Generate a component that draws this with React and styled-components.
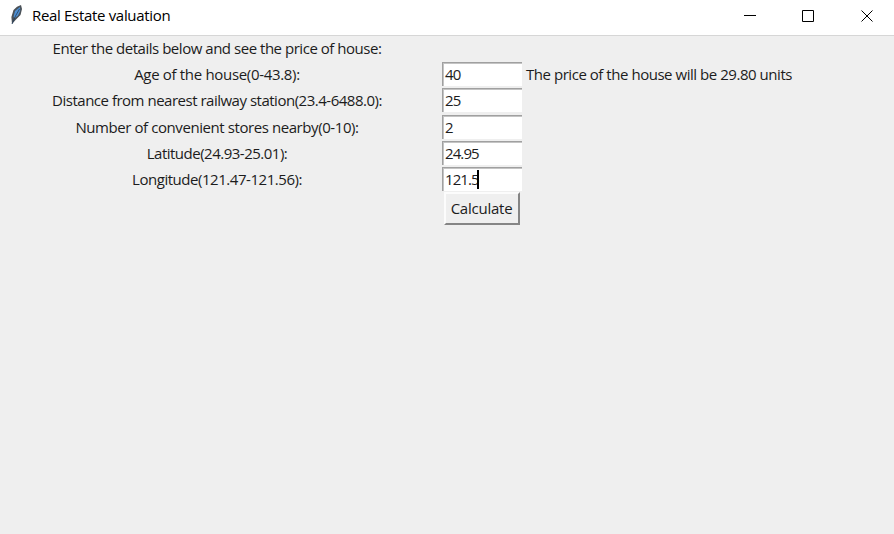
import React from 'react';
import styled, { createGlobalStyle } from 'styled-components';

const GlobalStyle = createGlobalStyle`
  * { box-sizing: border-box; }
  body { margin: 0; overflow: hidden; background: #efefef; }
`;
const Window = styled.div`
  width: 894px;
  height: 534px;
  background: #efefef;
  color: #1c1c1c;
  font: 15px/20px 'Open Sans', 'Noto Sans', sans-serif;
`;
const TitleBar = styled.header`
  display: flex;
  align-items: center;
  height: 36px;
  padding: 0 0 5px 9px;
  background: #fff;
  border-bottom: 1px solid #d6d6d6;
  color: #000;
`;
const Title = styled.h1`
  flex: 1;
  margin: 0 0 0 9px;
  font-size: 15px;
  font-weight: 400;
  letter-spacing: -0.32px;
  white-space: nowrap;
`;
const Controls = styled.div`
  display: flex;
  margin: 1px -3px 0 0;
`;
const Control = styled.div`
  display: grid;
  place-items: center;
  width: ${p => p.$width || 58}px;
  height: 31px;
`;
const Form = styled.main`
  display: grid;
  grid-template-columns: 434px 96px 364px;
  grid-template-rows: 26px 26px 27px 26px 26px 26px 34px;
`;
const Label = styled.label`
  grid-column: 1;
  display: flex;
  justify-content: center;
  align-items: center;
  height: 24px;
  letter-spacing: ${p => p.$spacing}px;
  white-space: nowrap;
`;
const Entry = styled.div`
  grid-column: 2;
  justify-self: center;
  display: flex;
  align-items: center;
  width: 80px;
  height: 24px;
  padding: 0 0 1px 2px;
  border-top: 1px solid #a0a0a0;
  border-left: 1px solid #a0a0a0;
  background: #fff;
  box-shadow: inset 1px 1px #c4c4c4;
  letter-spacing: -0.9px;
`;
const Caret = styled.i`
  width: 2px;
  height: 19px;
  margin-left: -2px;
  background: #000;
`;
const Result = styled.output`
  grid-column: 3;
  height: 24px;
  margin-left: -4px;
  line-height: 24px;
  letter-spacing: -0.46px;
  white-space: nowrap;
`;
const Button = styled.button`
  grid-column: 2;
  justify-self: center;
  width: 76px;
  height: 33px;
  margin-top: -1px;
  padding: 0 1px 1px 0;
  border: 2px solid;
  border-color: #fcfcfc #858585 #858585 #fcfcfc;
  background: #efefef;
  color: inherit;
  font: inherit;
  letter-spacing: -0.24px;
`;

const fields = [
  { label: 'Age of the house(0-43.8):', value: '40', spacing: -0.32 },
  { label: 'Distance from nearest railway station(23.4-6488.0):', value: '25', spacing: -0.49 },
  { label: 'Number of convenient stores nearby(0-10):', value: '2', spacing: -0.42 },
  { label: 'Latitude(24.93-25.01):', value: '24.95', spacing: -0.5 },
  { label: 'Longitude(121.47-121.56):', value: '121.5', spacing: -0.46, focused: true },
];

function Feather() {
  return (
    <svg width="14" height="22" viewBox="0 0 14 22">
      <path d="M3 20 2.4 13 4.5 6 8 2.8 12 1 13 5 11.5 11 7 15.5Z" fill="#4b5157" />
      <path d="M4.5 13 6 7 11 3 11.2 7 9 11.5 6 14Z" fill="#4e8fd2" />
      <path d="M3 20 6.5 12 10.5 5" fill="none" stroke="#243e5c" strokeWidth=".8" />
    </svg>
  );
}

export default function App() {
  return (
    <Window>
      <GlobalStyle />
      <TitleBar>
        <Feather />
        <Title>Real Estate valuation</Title>
        <Controls>
          <Control><svg width="12" height="12"><path d="M0 5.5h12" stroke="#000" /></svg></Control>
          <Control><svg width="12" height="12"><path d="M.5.5h11v11H.5z" fill="none" stroke="#000" /></svg></Control>
          <Control $width={60}><svg width="12" height="12"><path d="m.5.5 11 11m0-11-11 11" stroke="#000" /></svg></Control>
        </Controls>
      </TitleBar>
      <Form>
        <Label $spacing={-0.47}>Enter the details below and see the price of house:</Label>
        {fields.map((f, i) => (
          <React.Fragment key={f.label}>
            <Label $spacing={f.spacing}>{f.label}</Label>
            <Entry>{f.value}{f.focused && <Caret />}</Entry>
            {i === 0 && <Result>The price of the house will be 29.80 units</Result>}
          </React.Fragment>
        ))}
        <Button>Calculate</Button>
      </Form>
    </Window>
  );
}
